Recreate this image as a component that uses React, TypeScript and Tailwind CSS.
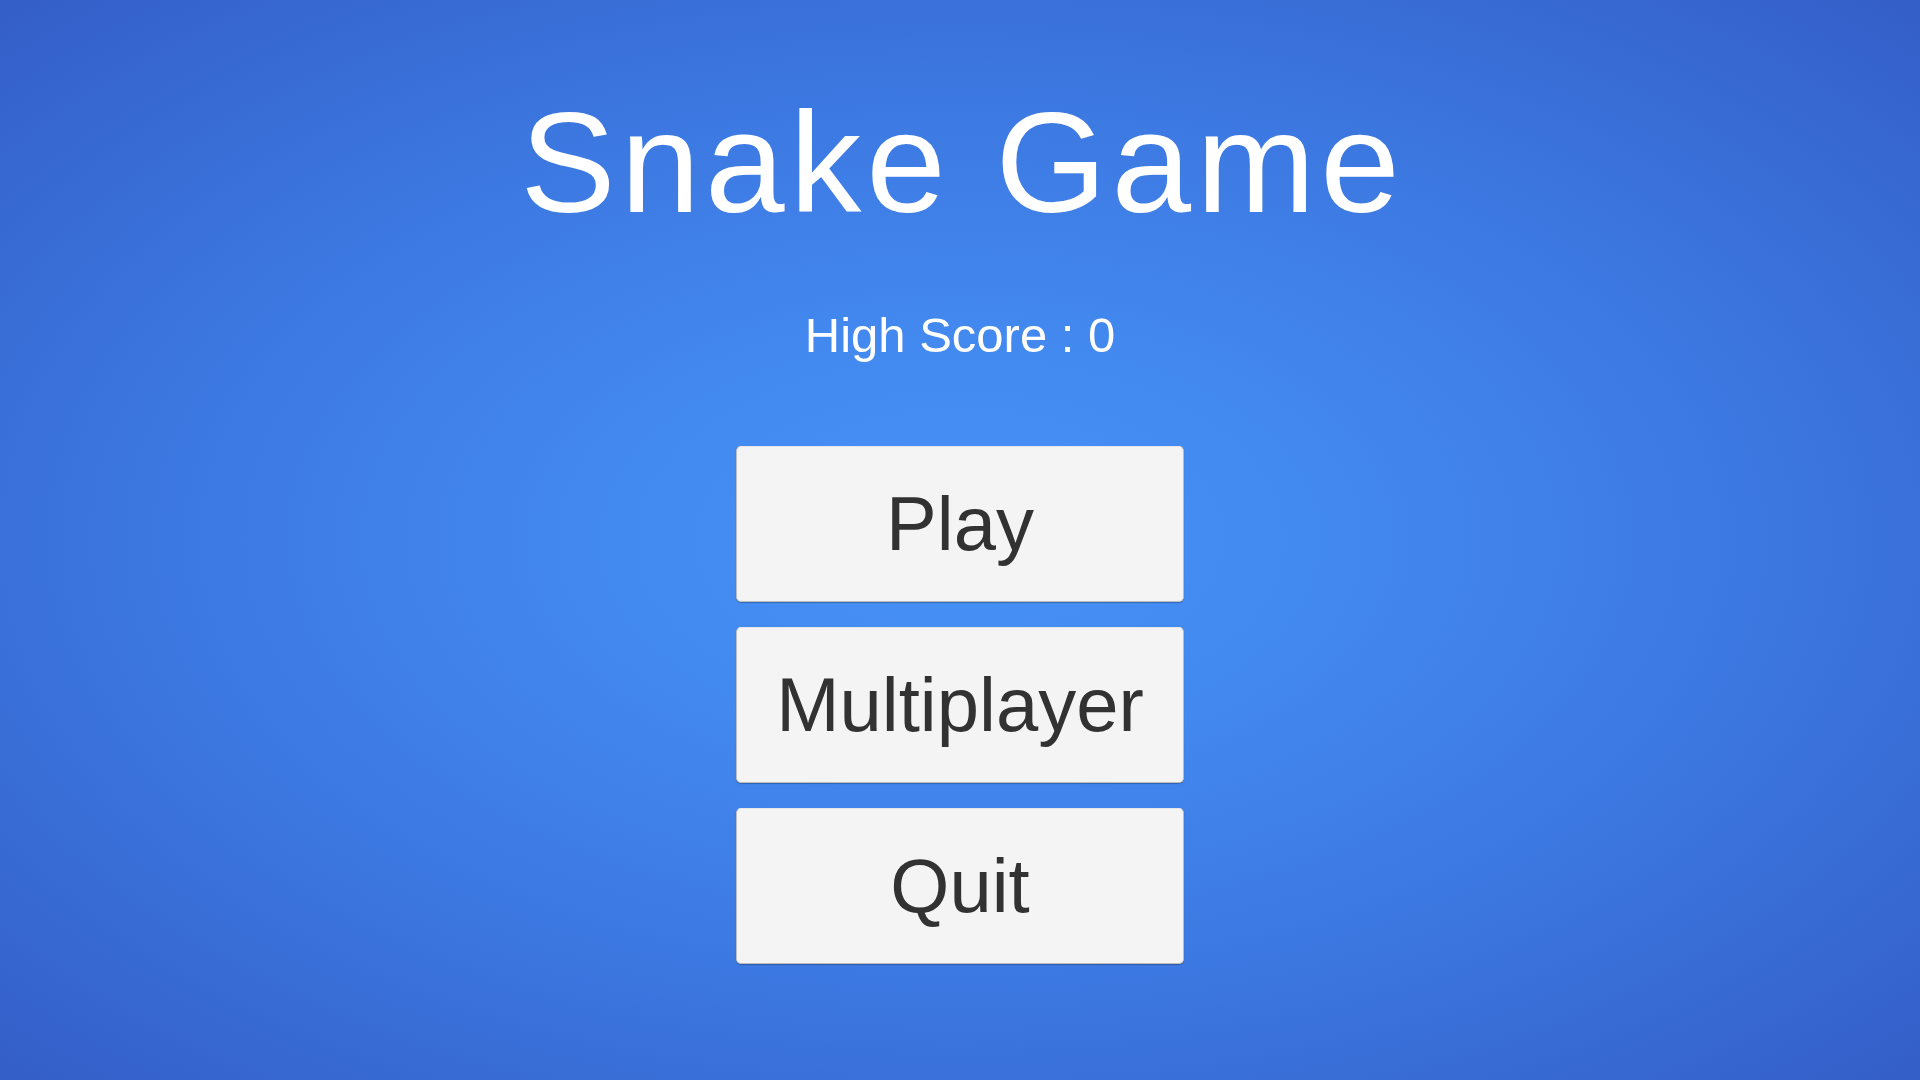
const buttons = ["Play", "Multiplayer", "Quit"];

export default function App() {
  return (
    <div
      className="w-screen h-screen overflow-hidden flex flex-col items-center font-['Liberation_Sans',Arial,sans-serif] bg-[radial-gradient(ellipse_at_center,#4791f5_0%,#438af0_25%,#3c77e0_60%,#345ec8_100%)]"
    >
      <h1 className="mt-[91px] pl-[5px] text-[143px] leading-none tracking-[5px] text-white whitespace-nowrap">
        Snake Game
      </h1>
      <div className="mt-[77px] text-[49px] leading-none text-white whitespace-nowrap">High Score : 0</div>
      <div className="mt-[86px] flex flex-col gap-[25px]">
        {buttons.map((label) => (
          <button
            key={label}
            className="w-[448px] h-[156px] flex items-center justify-center rounded-[5px] bg-[#f4f4f4] border border-[#bdbdbd] border-t-[#e6e6e6] shadow-[0_1px_1px_rgba(0,0,0,0.25)] text-[76px] leading-none text-[#323232]"
          >
            {label}
          </button>
        ))}
      </div>
    </div>
  );
}
